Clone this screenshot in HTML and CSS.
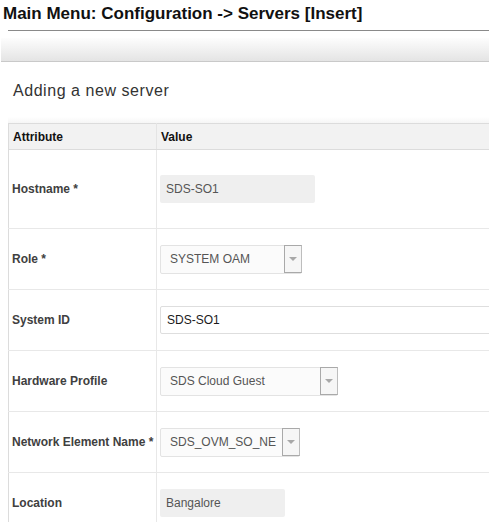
FILE: index.html
```html
<!DOCTYPE html>
<html>
<head>
<meta charset="utf-8">
<link rel="stylesheet" href="styles.css">
</head>
<body>
<h1 class="title">Main Menu: Configuration -&gt; Servers [Insert]</h1>
<div class="rule"></div>
<div class="toolbar"></div>
<h2 class="subtitle">Adding a new server</h2>
<div class="shade"></div>
<table class="form-table">
  <thead>
    <tr class="head-row"><th class="col-attr">Attribute</th><th class="col-val">Value</th></tr>
  </thead>
  <tbody>
    <tr class="row row-tall">
      <td class="label">Hostname *</td>
      <td class="value"><div class="field readonly w155">SDS-SO1</div></td>
    </tr>
    <tr class="row">
      <td class="label">Role *</td>
      <td class="value"><div class="select w142"><span class="select-text">SYSTEM OAM</span><span class="select-btn"><span class="arrow"></span></span></div></td>
    </tr>
    <tr class="row">
      <td class="label">System ID</td>
      <td class="value"><div class="field editable">SDS-SO1</div></td>
    </tr>
    <tr class="row">
      <td class="label">Hardware Profile</td>
      <td class="value"><div class="select w178"><span class="select-text">SDS Cloud Guest</span><span class="select-btn"><span class="arrow"></span></span></div></td>
    </tr>
    <tr class="row">
      <td class="label">Network Element Name *</td>
      <td class="value"><div class="select w140"><span class="select-text">SDS_OVM_SO_NE</span><span class="select-btn"><span class="arrow"></span></span></div></td>
    </tr>
    <tr class="row">
      <td class="label">Location</td>
      <td class="value"><div class="field readonly w125">Bangalore</div></td>
    </tr>
  </tbody>
</table>
</body>
</html>
```
FILE: styles.css
```css
html, body {
  margin: 0;
  padding: 0;
  background: #fff;
  font-family: "Liberation Sans", Arial, sans-serif;
  overflow: hidden;
}
.title {
  margin: 3px 0 0 3px;
  font-size: 17px;
  line-height: 21px;
  font-weight: bold;
  color: #111;
  white-space: nowrap;
}
.rule {
  margin: 6px 0 0 8px;
  height: 1px;
  background: #8a8a8a;
}
.toolbar {
  margin: 7px 0 0 1px;
  height: 23px;
  background: linear-gradient(#fdfdfd, #e4e4e4);
  border-bottom: 1px solid #c9c9c9;
}
.subtitle {
  margin: 19px 0 0 13px;
  font-size: 16px;
  line-height: 20px;
  font-weight: normal;
  letter-spacing: 0.55px;
  color: #333;
}
.shade {
  margin: 16px 0 0 8px;
  height: 6px;
  background: linear-gradient(#fff, #f6f6f6);
}
.form-table {
  margin-left: 8px;
  width: 500px;
  border-collapse: collapse;
  border-left: 1px solid #dcdcdc;
  table-layout: fixed;
}
.head-row {
  background: #f2f2f2;
  height: 26px;
}
.head-row th {
  border-top: 1px solid #dcdcdc;
  border-bottom: 1px solid #dcdcdc;
  text-align: left;
  font-size: 12px;
  font-weight: bold;
  color: #111;
  padding: 0 0 0 4px;
  height: 24px;
}
.col-attr {
  width: 143px;
  border-right: 1px solid #e4e4e4;
}
.row td {
  height: 60px;
  border-bottom: 1px solid #e8e8e8;
  padding: 0;
}
.row-tall td {
  height: 78px;
}
.label {
  font-size: 12px;
  font-weight: bold;
  color: #404040;
  padding-left: 3px !important;
  border-right: 1px solid #e8e8e8;
  white-space: nowrap;
}
.value {
  padding-left: 3px !important;
}
.field {
  box-sizing: border-box;
  height: 28px;
  font-size: 12px;
  line-height: 28px;
  padding-left: 6px;
  border-radius: 2px;
}
.readonly {
  background: #efefef;
  color: #555;
}
.editable {
  width: 340px;
  border: 1px solid #dedede;
  line-height: 26px;
  color: #1a1a1a;
  background: #fff;
}
.w155 { width: 155px; }
.w125 { width: 125px; }
.select {
  box-sizing: border-box;
  display: flex;
  align-items: center;
  justify-content: space-between;
  height: 29px;
  border: 1px solid #e3e3e3;
  background: #fbfbfb;
  border-radius: 2px;
  font-size: 12px;
  color: #555;
}
.w142 { width: 142px; }
.w178 { width: 178px; }
.w140 { width: 140px; }
.select-text {
  padding-left: 9px;
  white-space: nowrap;
}
.select-btn {
  box-sizing: border-box;
  width: 18px;
  height: 28px;
  border: 1px solid #a9a9a9;
  border-right-color: #bdbdbd;
  background: #f6f6f6;
  display: flex;
  align-items: center;
  justify-content: center;
  margin-right: -1px;
}
.arrow {
  width: 0;
  height: 0;
  border-left: 4px solid transparent;
  border-right: 4px solid transparent;
  border-top: 4px solid #a8a8a8;
}
```
